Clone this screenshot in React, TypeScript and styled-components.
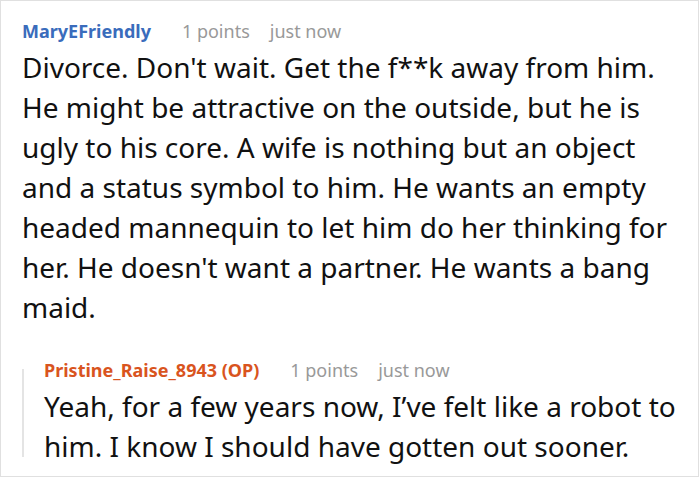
import React from "react"
import styled, { createGlobalStyle } from "styled-components"

const GlobalStyle = createGlobalStyle`
  html, body {
    margin: 0;
    padding: 0;
    background: #fff;
  }
  body {
    font-family: "Noto Sans", "Open Sans", sans-serif;
  }
`

const Frame = styled.div`
  box-sizing: border-box;
  width: 699px;
  height: 477px;
  border: 1px solid #e0e0e0;
  padding: 16px 14px 0 21px;
  overflow: hidden;
`

const Comment = styled.div`
  display: flex;
  flex-direction: column;
`

const Reply = styled(Comment)`
  margin-top: 42px;
  border-left: 2px solid #e4e4e4;
  padding-left: 20px;
  & > :first-child {
    margin-top: -13px;
  }
  & > :last-child {
    margin-bottom: -9px;
  }
`

const Meta = styled.div`
  display: flex;
  align-items: baseline;
  font-size: 18px;
  line-height: 28px;
`

const Author = styled.span<{ $op?: boolean }>`
  font-weight: 700;
  margin-right: 31px;
  color: ${(p) => (p.$op ? "#d9541e" : "#3a6cbc")};
`

const Info = styled.span`
  color: #999;
  margin-right: 20px;
`

const Body = styled.p`
  margin: 2px 0 0;
  font-size: 28px;
  line-height: 40px;
  color: #111;
`

type CommentData = {
  author: string
  op?: boolean
  points: number
  time: string
  text: string
}

const main: CommentData = {
  author: "MaryEFriendly",
  points: 1,
  time: "just now",
  text:
    "Divorce. Don't wait. Get the f**k away from him. He might be attractive on the outside, but he is ugly to his core. A wife is nothing but an object and a status symbol to him. He wants an empty headed mannequin to let him do her thinking for her. He doesn't want a partner. He wants a bang maid.",
}

const reply: CommentData = {
  author: "Pristine_Raise_8943 (OP)",
  op: true,
  points: 1,
  time: "just now",
  text: "Yeah, for a few years now, I’ve felt like a robot to him. I know I should have gotten out sooner.",
}

const CommentContent = ({ data }: { data: CommentData }) => (
  <>
    <Meta>
      <Author $op={data.op}>{data.author}</Author>
      <Info>{data.points} points</Info>
      <Info>{data.time}</Info>
    </Meta>
    <Body>{data.text}</Body>
  </>
)

export default function App() {
  return (
    <>
      <GlobalStyle />
      <Frame>
        <Comment>
          <CommentContent data={main} />
        </Comment>
        <Reply>
          <CommentContent data={reply} />
        </Reply>
      </Frame>
    </>
  )
}
